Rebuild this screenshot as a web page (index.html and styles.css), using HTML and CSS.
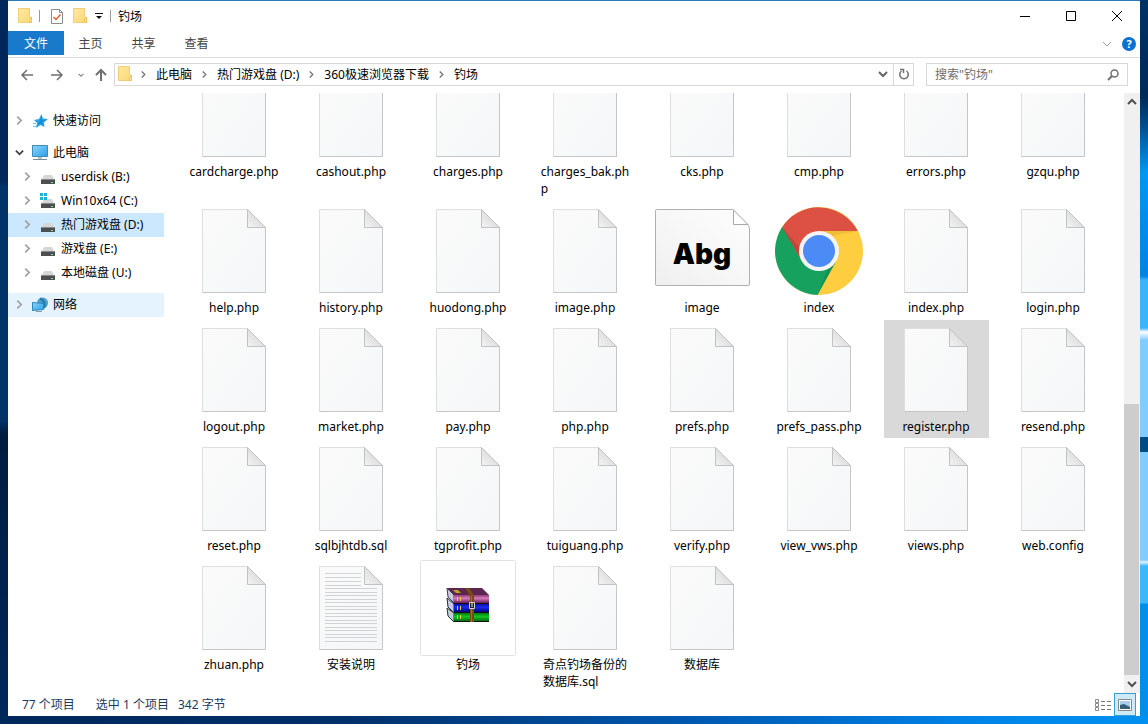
FILE: index.html
```
<!DOCTYPE html>
<html lang="zh-CN">
<head>
  <meta charset="UTF-8">
  <title>钓场</title>
  <link rel="stylesheet" href="styles.css">
</head>
<body>
  <!-- Iconos compartidos -->
  <svg class="sprite" width="0" height="0" aria-hidden="true">
    <defs>
      <linearGradient id="paper" x1="0" y1="0" x2="1" y2="1">
        <stop offset="0" stop-color="#fafafa"/>
        <stop offset="0.4" stop-color="#f8f9f9"/>
        <stop offset="1" stop-color="#f5f6f8"/>
      </linearGradient>
      <linearGradient id="fold" x1="0" y1="1" x2="1" y2="0">
        <stop offset="0" stop-color="#f4f4f4"/>
        <stop offset="1" stop-color="#cccccc"/>
      </linearGradient>
      <linearGradient id="imgpaper" x1="1" y1="0" x2="0" y2="1">
        <stop offset="0" stop-color="#fdfdfd"/>
        <stop offset="0.5" stop-color="#f7f7f7"/>
        <stop offset="1" stop-color="#efefef"/>
      </linearGradient>
      <linearGradient id="folderfill" x1="0" y1="0" x2="1" y2="1">
        <stop offset="0" stop-color="#ffe9a0"/>
        <stop offset="1" stop-color="#f9d877"/>
      </linearGradient>
      <linearGradient id="screen" x1="0" y1="0" x2="1" y2="1">
        <stop offset="0" stop-color="#8bd6fb"/>
        <stop offset="1" stop-color="#2c9fe8"/>
      </linearGradient>
      <linearGradient id="pink" x1="0" y1="0" x2="0" y2="1">
        <stop offset="0" stop-color="#8c3a78"/>
        <stop offset="0.4" stop-color="#d67cbc"/>
        <stop offset="1" stop-color="#6a1c58"/>
      </linearGradient>
      <linearGradient id="blue" x1="0" y1="0" x2="0" y2="1">
        <stop offset="0" stop-color="#1010a0"/>
        <stop offset="0.4" stop-color="#1a2cf0"/>
        <stop offset="1" stop-color="#000078"/>
      </linearGradient>
      <linearGradient id="green" x1="0" y1="0" x2="0" y2="1">
        <stop offset="0" stop-color="#007a10"/>
        <stop offset="0.4" stop-color="#14c424"/>
        <stop offset="1" stop-color="#005c08"/>
      </linearGradient>
    </defs>
    <symbol id="page" viewBox="0 0 96 96">
      <path d="M16.500 6.500H61.500L79.500 24.500V89.500H16.500Z" fill="url(#paper)" stroke="#dcdee0"/>
      <path d="M79.500 24.500V89.500H16.500" fill="none" stroke="#c4c7c9"/>
      <path d="M61.500 6.500V24.500H79.500Z" fill="url(#fold)" stroke="#c0c2c4"/>
    </symbol>
    <symbol id="text" viewBox="0 0 96 96">
      <use href="#page" width="96" height="96"/>
      <path d="M22 13.500H58M22 17.500H58M22 21.500H58M22 25.500H58M22 28.500H74M22 32.500H74M22 35.500H74M22 39.500H74M22 42.500H74M22 46.500H74M22 49.500H74M22 53.500H74M22 56.500H74M22 60.500H74M22 63.500H74M22 67.500H74M22 70.500H74M22 74.500H74M22 77.500H74M22 81.500H74" stroke="#d0d3d5"/>
    </symbol>
    <symbol id="picture" viewBox="0 0 96 96">
      <path d="M2.500 6.500H79L94 22Q95.500 24 95.500 26V81Q95.500 82.500 94 82.500H2.500Q1.500 82.500 1.500 81V7.500Q1.500 6.500 2.500 6.500Z" fill="url(#imgpaper)" stroke="#b0b0b0"/>
      <path d="M79.500 7V21.500H94Z" fill="#fff" stroke="#a9a9a9"/>
    </symbol>
    <symbol id="chrome" viewBox="0 0 96 96">
      <circle cx="48" cy="48" r="44" fill="#ffcd40"/>
      <path d="M48 48L30.700 58L10.400 25.200A44 44 0 0 1 86.800 28H48Z" fill="#dd5144"/>
      <path d="M11.200 24A44 44 0 0 0 46.500 92L65.300 58L48 48L30.700 58Z" fill="#16a15f"/>
      <path d="M48 28H86.800L54 34Z" fill="#c99a28" opacity=".3"/>
      <path d="M11.200 24L31 58L30 46Z" fill="#8c2a20" opacity=".3"/>
      <path d="M65 58L46.500 92L58 62Z" fill="#0b6b3c" opacity=".25"/>
      <circle cx="48" cy="48" r="20" fill="#f4f4f4"/>
      <circle cx="48" cy="48" r="16" fill="#4c8bf5"/>
    </symbol>
    <symbol id="rar" viewBox="0 0 96 96">
      <rect x=".5" y=".5" width="95" height="95" rx="1" fill="#fff" stroke="#e3e3e3"/>
      <path d="M27 28H62L69 35H34Z" fill="#5c2650"/>
      <path d="M33 30L38 30L41 33H36Z" fill="#b8a820"/>
      <path d="M27 28L34 35V43L28 37Z" fill="#c8cade" stroke="#4c3450"/>
      <path d="M27 38L34 44V53L28 47Z" fill="#c8cade" stroke="#23234f"/>
      <path d="M27 48L34 53V62L28 56Z" fill="#c8cade" stroke="#1c3c20"/>
      <path d="M34 35H69V43H34Z" fill="url(#pink)"/>
      <path d="M34 44H69V52H34Z" fill="url(#blue)"/>
      <path d="M34 53H69V62H34Z" fill="url(#green)"/>
      <path d="M34 43.500H69M34 52.500H69M34 61.500H69" stroke="#111"/>
      <path d="M37.500 37V41M40.500 37V41M37.500 46V50M40.500 46V50M37.500 55V59M40.500 55V59" stroke="#e8d040"/>
      <path d="M45 28H49L54 35V62H50V36Z" fill="#7a4a14"/>
      <path d="M51.500 36V62" stroke="#a86a24"/>
      <path d="M49.500 42.500H54.500V48.500H49.500Z" fill="#222" stroke="#d8d8c8"/>
      <path d="M52 43V47" stroke="#eee"/>
    </symbol>
    <symbol id="folder" viewBox="0 0 16 16">
      <path d="M1.500 .5H12.500V8.500L14.500 9.500V14.500H1.500Z" fill="url(#folderfill)" stroke="#f0cf74"/>
      <path d="M12.500 14.500V11.500L14.500 9.500V14.500Z" fill="#ffe9a0" stroke="#e9c05a"/>
    </symbol>
    <symbol id="right" viewBox="0 0 8 8">
      <path d="M2 0.500L5.500 4L2 7.500" fill="none" stroke="currentColor" stroke-width="1.500"/>
    </symbol>
    <symbol id="down" viewBox="0 0 10 10">
      <path d="M1 3L5 7L9 3" fill="none" stroke="currentColor" stroke-width="2"/>
    </symbol>
    <symbol id="drive" viewBox="0 0 16 16">
      <path d="M4 6H12L14 10H2Z" fill="#d6d6d6"/>
      <path d="M1 10H15V15H1Z" fill="#4c4f52"/>
      <path d="M1 10.500H15" stroke="#85888b"/>
      <path d="M11 13.500H13" stroke="#7fe87f"/>
    </symbol>
    <symbol id="windrive" viewBox="0 0 16 16">
      <use href="#drive" width="16" height="16"/>
      <path d="M0 0H3V3H0ZM4 0H7V3H4ZM0 4H3V7H0ZM4 4H7V7H4Z" fill="#19b3d8"/>
    </symbol>
    <symbol id="star" viewBox="0 0 16 16">
      <path d="M9.500 1L11 5.500L16 6L12 9.500L12.500 14L8.500 12L4 15L5 10L2 7L7 6Z" fill="#2da4e6"/>
      <path d="M9.500 3L10 7L14 6.500L10 9L11 13L8 10.500L5 13L7 9Z" fill="#178bd0"/>
      <path d="M1 10.500H4M1 13.500H4" stroke="#7cc6ee"/>
    </symbol>
    <symbol id="pc" viewBox="0 0 16 16">
      <path d="M.5 .5H15.500V11.500H.5Z" fill="url(#screen)" stroke="#3a8cba"/>
      <path d="M6 12H10V14H6Z" fill="#b8c4cc"/>
      <path d="M1 14.500H15" stroke="#7d8a92"/>
    </symbol>
    <symbol id="net" viewBox="0 0 16 16">
      <circle cx="10.500" cy="6" r="5.500" fill="#4a9fcb"/>
      <path d="M8 1.500Q14 4 12 11" fill="none" stroke="#2878a4" stroke-width="2"/>
      <path d="M.5 5.500L11.500 6.500V12.500L.5 13.500Z" fill="url(#screen)" stroke="#2f86bd"/>
      <path d="M4 14.500H10" stroke="#8a9aa4"/>
    </symbol>
  </svg>

  <div class="window">
    <header class="titlebar">
      <svg class="icon"><use href="#folder"/></svg>
      <span class="bar first"></span>
      <button class="quick" aria-label="属性">
        <svg class="icon" viewBox="0 0 16 16"><path d="M2.500 1.500H10.500L13.500 4.500V15.500H2.500Z" fill="#fff" stroke="#8c8c8c"/><path d="M10.500 1.500V4.500H13.500" fill="none" stroke="#8c8c8c"/><path d="M4.500 9L7 11.500L11.500 6.500" fill="none" stroke="#e2622c" stroke-width="1.500"/></svg>
      </button>
      <button class="quick" aria-label="新建文件夹"><svg class="icon"><use href="#folder"/></svg></button>
      <button class="quick" aria-label="自定义快速访问工具栏">
        <svg width="8" height="8" viewBox="0 0 8 8"><path d="M0 1.500H8" stroke="#111"/><path d="M1 4H7L4 7Z" fill="#111"/></svg>
      </button>
      <span class="bar"></span>
      <h1>钓场</h1>
      <div class="controls">
        <button aria-label="最小化"><svg width="10" height="10"><path d="M0 5.500H10" stroke="#000"/></svg></button>
        <button aria-label="最大化"><svg width="10" height="10"><path d="M.5 .5H9.500V9.500H.5Z" fill="none" stroke="#000"/></svg></button>
        <button aria-label="关闭"><svg width="10" height="10"><path d="M0 0L10 10M10 0L0 10" stroke="#000"/></svg></button>
      </div>
    </header>

    <nav class="ribbon">
      <button class="tab active">文件</button>
      <button class="tab">主页</button>
      <button class="tab">共享</button>
      <button class="tab">查看</button>
      <button class="expand" aria-label="展开功能区"><svg width="10" height="10" viewBox="0 0 10 10"><path d="M1 3L5 7L9 3" fill="none" stroke="#a0a0a0"/></svg></button>
      <button class="help" aria-label="帮助">?</button>
    </nav>

    <div class="navrow">
      <div class="arrows">
        <button aria-label="后退"><svg width="14" height="14"><path d="M13 7H2M7 2L2 7L7 12" fill="none" stroke="#707070" stroke-width="1.500"/></svg></button>
        <button aria-label="前进"><svg width="14" height="14"><path d="M1 7H12M7 2L12 7L7 12" fill="none" stroke="#707070" stroke-width="1.500"/></svg></button>
        <button class="small" aria-label="最近位置"><svg width="6" height="6" viewBox="0 0 10 10"><use href="#down"/></svg></button>
        <button class="up" aria-label="上移"><svg width="14" height="14"><path d="M7 13V2M2 7L7 2L12 7" fill="none" stroke="#707070" stroke-width="2"/></svg></button>
      </div>
      <div class="address">
        <svg class="icon"><use href="#folder"/></svg>
        <svg class="sep"><use href="#right"/></svg>
        <a href="#">此电脑</a>
        <svg class="sep"><use href="#right"/></svg>
        <a href="#">热门游戏盘 (D:)</a>
        <svg class="sep"><use href="#right"/></svg>
        <a href="#">360极速浏览器下载</a>
        <svg class="sep"><use href="#right"/></svg>
        <a href="#">钓场</a>
        <button class="history" aria-label="以前的位置"><svg width="10" height="10"><use href="#down"/></svg></button>
        <button class="refresh" aria-label="刷新"><svg width="12" height="12"><path d="M3.500 3A4.300 4.300 0 1 0 8.500 3M2 1.500H5.500V5" fill="none" stroke="#707070" stroke-width="1.500"/></svg></button>
      </div>
      <div class="search">
        <input type="text" aria-label="搜索" placeholder='搜索"钓场"'>
        <svg width="12" height="12"><circle cx="7.500" cy="4.500" r="3.500" fill="none" stroke="#707070" stroke-width="1.500"/><path d="M5 7L1 11" stroke="#707070" stroke-width="2"/></svg>
      </div>
    </div>

    <main class="main">
      <aside class="tree">
        <button class="node"><svg class="twist"><use href="#right"/></svg><svg class="icon"><use href="#star"/></svg>快速访问</button>
        <div class="group">
          <button class="node open"><svg class="twist"><use href="#down"/></svg><svg class="icon"><use href="#pc"/></svg>此电脑</button>
          <button class="node child"><svg class="twist"><use href="#right"/></svg><svg class="icon"><use href="#drive"/></svg>userdisk (B:)</button>
          <button class="node child"><svg class="twist"><use href="#right"/></svg><svg class="icon"><use href="#windrive"/></svg>Win10x64 (C:)</button>
          <button class="node child selected"><svg class="twist"><use href="#right"/></svg><svg class="icon"><use href="#drive"/></svg>热门游戏盘 (D:)</button>
          <button class="node child"><svg class="twist"><use href="#right"/></svg><svg class="icon"><use href="#drive"/></svg>游戏盘 (E:)</button>
          <button class="node child"><svg class="twist"><use href="#right"/></svg><svg class="icon"><use href="#drive"/></svg>本地磁盘 (U:)</button>
        </div>
        <button class="node hover"><svg class="twist"><use href="#right"/></svg><svg class="icon"><use href="#net"/></svg>网络</button>
      </aside>

      <div class="files" id="files"></div>

      <div class="scrollbar">
        <button aria-label="向上滚动"><svg class="flip" width="10" height="10"><use href="#down"/></svg></button>
        <div class="track"><div class="thumb"></div></div>
        <button aria-label="向下滚动"><svg width="10" height="10"><use href="#down"/></svg></button>
      </div>
    </main>

    <footer class="status">
      <span>77 个项目</span>
      <span class="chosen">选中 1 个项目</span>
      <span>342 字节</span>
      <div class="views">
        <button aria-label="详细信息"><svg width="16" height="14"><path d="M.5 1.500H3.500V4.500H.5ZM.5 5.500H3.500V8.500H.5ZM.5 9.500H3.500V12.500H.5Z" fill="none" stroke="#8a8a8a"/><path d="M6 3.500H10M12 3.500H16M6 7.500H10M12 7.500H16M6 11.500H10M12 11.500H16" stroke="#777"/></svg></button>
        <button class="on" aria-label="大图标"><svg width="14" height="12"><path d="M.5 .5H13.500V11.500H.5Z" fill="#fff" stroke="#888"/><path d="M2 2H12V10H2Z" fill="#a9cdea"/><path d="M2 6L6 5L12 8V10H2Z" fill="#355f78"/></svg></button>
      </div>
    </footer>
  </div>

  <script>
    // nombre, icono (por defecto "page"), texto sobre el icono; "|" marca el salto de línea
    var files = [
      ['cardcharge.php'], ['cashout.php'], ['charges.php'], ['charges_bak.ph|p'],
      ['cks.php'], ['cmp.php'], ['errors.php'], ['gzqu.php'],
      ['help.php'], ['history.php'], ['huodong.php'], ['image.php'],
      ['image', 'picture', 'Abg'], ['index', 'chrome'], ['index.php'], ['login.php'],
      ['logout.php'], ['market.php'], ['pay.php'], ['php.php'],
      ['prefs.php'], ['prefs_pass.php'], ['register.php'], ['resend.php'],
      ['reset.php'], ['sqlbjhtdb.sql'], ['tgprofit.php'], ['tuiguang.php'],
      ['verify.php'], ['view_vws.php'], ['views.php'], ['web.config'],
      ['zhuan.php'], ['安装说明', 'text'], ['钓场', 'rar'], ['奇点钓场备份的|数据库.sql'],
      ['数据库']
    ];
    var selected = 'register.php';

    var html = '';
    for (var i = 0; i < files.length; i++) {
      var name = files[i][0];
      var icon = files[i][1] || 'page';
      var caption = files[i][2] ? '<text class="caption" x="48" y="61" text-anchor="middle">' + files[i][2] + '</text>' : '';
      html += '<button class="file' + (name === selected ? ' selected' : '') + '">' +
        '<svg class="thumbnail"><use href="#' + icon + '"/>' + caption + '</svg>' +
        '<span class="name">' + name.replace('|', '<br>') + '</span></button>';
    }
    document.getElementById('files').innerHTML = html;
  </script>
</body>
</html>
```
FILE: styles.css
```
* {
  box-sizing: border-box;
}

body {
  margin: 0;
  height: 100vh;
  padding: 0 8px 8px;
  background:
    linear-gradient(90deg, #00285a 0, #00306a 30%, #0058b0 60%, #0084e8 85%, #0090f0 100%) bottom / 100% 8px no-repeat,
    linear-gradient(#003166 0, #002a58 24%, #004a8c 31%, #0098f0 43%, #0084e4 69%, #3cb4fa 70%, #3cb4fa 82%, #fff 83%, #80ccff 85%, #80ccff 100%) right top / 8px 400px no-repeat,
    linear-gradient(#80ccff 0, #80ccff 37px, #004a85 37px, #004a85 52px, #80ccff 52px, #80ccff 160px, #e0f4ff 162px, #3cb8fa 166px, #3cb8fa 203px, #0090e8 204px, #0088ec 100%) right 400px / 8px 100% no-repeat,
    linear-gradient(#00285a 0, #00285a 25%, #003468 26%, #003468 58%, #001c40 60%, #00285a);
  font-family: "Noto Sans", "Noto Sans CJK SC", sans-serif;
  font-size: 12px;
  line-height: 17px;
  color: #000;
}

button {
  display: flex;
  align-items: center;
  justify-content: center;
  padding: 0;
  border: 0;
  background: none;
  font: inherit;
  color: inherit;
}

svg {
  display: block;
  flex: none;
}

.sprite {
  position: absolute;
}

.icon {
  width: 16px;
  height: 16px;
}

.window {
  display: flex;
  flex-direction: column;
  height: 100%;
  border-top: 1px solid #2a7ab8;
  background: #fff;
}

/* Barra de título */
.titlebar {
  display: flex;
  align-items: center;
  height: 30px;
  padding-left: 9px;
}

.titlebar h1 {
  margin: 0 0 0 7px;
  font-size: 12px;
  font-weight: normal;
}

.bar {
  width: 1px;
  height: 12px;
  background: #999;
}

.bar.first {
  margin: 0 9px 0 6px;
}

.quick {
  margin-right: 7px;
}

.controls {
  display: flex;
  margin-left: auto;
}

.controls button {
  width: 46px;
  height: 30px;
}

/* Cinta */
.ribbon {
  display: flex;
  height: 27px;
  border-bottom: 1px solid #dcdcdc;
  color: #444;
}

.tab {
  width: 53px;
  height: 24px;
}

.tab.active {
  width: 56px;
  background: #1979ca;
  color: #fff;
}

.ribbon .expand {
  height: 26px;
  margin-left: auto;
}

.help {
  width: 14px;
  height: 14px;
  margin: 6px 4px 0 10px;
  border-radius: 50%;
  background: #0a72cf;
  color: #fff;
  font-size: 11px;
  font-weight: bold;
  line-height: 14px;
}

/* Dirección y búsqueda */
.navrow {
  display: flex;
  align-items: flex-start;
  height: 35px;
  padding: 5px 12px 0 0;
}

.arrows {
  display: flex;
  width: 106px;
  height: 23px;
  padding-left: 12px;
  color: #888;
}

.arrows button {
  width: 14px;
  margin-right: 16px;
}

.arrows .small {
  width: 6px;
  margin: 0 10px 0 -2px;
}

.arrows .up {
  margin: 0;
}

.address {
  display: flex;
  flex: 1;
  align-items: center;
  height: 23px;
  margin-right: 12px;
  padding: 0 0 1px 2px;
  border: 1px solid #d9d9d9;
}

.address a {
  color: #000;
  text-decoration: none;
}

.sep {
  width: 7px;
  height: 7px;
  margin: 0 9px;
  color: #777;
}

.icon + .sep {
  margin-left: 7px;
}

.history {
  width: 20px;
  height: 21px;
  margin-left: auto;
  color: #666;
}

.refresh {
  width: 20px;
  height: 21px;
  border-left: 1px solid #d9d9d9;
}

.search {
  display: flex;
  align-items: center;
  width: 202px;
  height: 23px;
  padding: 0 8px;
  border: 1px solid #d9d9d9;
}

.search input {
  flex: 1;
  min-width: 0;
  padding: 0;
  border: 0;
  outline: 0;
  font: inherit;
}

.search input::placeholder {
  color: #6d6d6d;
}

.main {
  display: flex;
  flex: 1;
  min-height: 0;
}

/* Árbol de carpetas */
.tree {
  width: 156px;
  padding-top: 16px;
}

.group {
  margin: 8px 0;
}

.node {
  justify-content: flex-start;
  width: 100%;
  height: 24px;
  padding: 0 0 1px 7px;
}

.node.child {
  padding-left: 15px;
}

.node.selected {
  background: #cce8ff;
}

.node.hover {
  background: #e5f3ff;
}

.node .icon {
  margin-right: 5px;
}

.twist {
  width: 9px;
  height: 9px;
  margin-right: 8px;
  color: #a0a0a0;
}

.open .twist {
  color: #404040;
}

/* Archivos */
.files {
  display: grid;
  flex: 1;
  grid-template-columns: repeat(auto-fill, 105px);
  align-content: end;
  gap: 1px 12px;
  margin-left: 18px;
  overflow: hidden;
}

.file {
  flex-direction: column;
  justify-content: flex-start;
  padding: 2px 1px 3px 0;
}

.file.selected {
  background: #d9d9d9;
}

.thumbnail {
  width: 96px;
  height: 96px;
}

.name {
  text-align: left;
  white-space: nowrap;
}

.caption {
  font-family: Inter, "Open Sans", sans-serif;
  font-size: 28px;
  font-weight: 900;
}

/* Barra de desplazamiento */
.scrollbar {
  display: flex;
  flex-direction: column;
  width: 16px;
  padding-right: 1px;
  background: #f0f0f0;
  color: #505050;
}

.scrollbar button {
  height: 18px;
}

.flip {
  transform: rotate(180deg);
}

.track {
  display: flex;
  flex: 1;
  align-items: flex-end;
}

.thumb {
  width: 100%;
  height: 48%;
  background: #cdcdcd;
}

/* Barra de estado */
.status {
  display: flex;
  align-items: center;
  height: 23px;
  padding: 0 4px 0 14px;
  color: #1e395b;
}

.chosen {
  margin: 0 9px 0 21px;
}

.views {
  display: flex;
  margin-left: auto;
}

.views button {
  width: 22px;
  height: 23px;
}

.views .on {
  border: 1px solid #3a9fd0;
  background: #cdeaf6;
}
```
